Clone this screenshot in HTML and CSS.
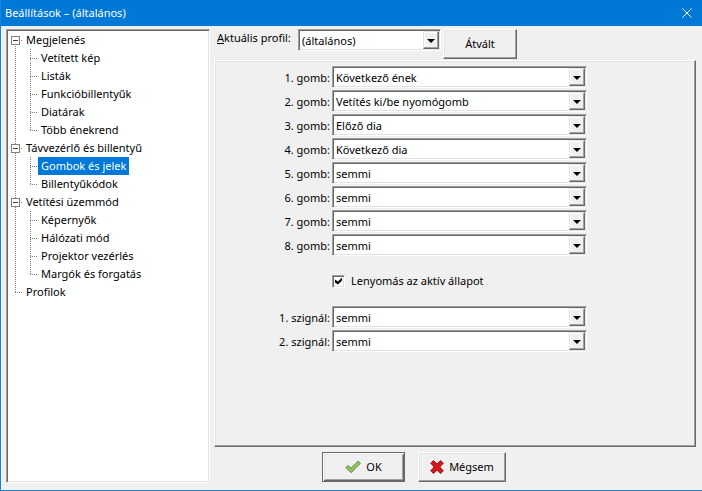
FILE: index.html
```html
<!DOCTYPE html>
<html lang="hu">
<head>
<meta charset="utf-8">
<meta name="viewport" content="width=device-width, initial-scale=1">
<title>Beállítások – (általános)</title>
<link rel="stylesheet" href="styles.css">
</head>
<body>
<div class="window">
  <header class="titlebar">
    <h1 class="title">Beállítások – (általános)</h1>
    <button class="close" type="button" aria-label="Bezárás">
      <svg width="10" height="10" viewBox="0 0 10 10"><path d="M0.5 0.5L9.5 9.5M9.5 0.5L0.5 9.5" stroke="#fff" fill="none"/></svg>
    </button>
  </header>
  <div class="content">
    <nav class="tree">
      <ul class="roots">
        <li class="root"><button class="toggle" type="button" aria-label="Megjelenés összecsukása"></button><a class="node" href="#">Megjelenés</a>
          <ul class="children">
            <li><a class="node" href="#">Vetített kép</a></li>
            <li><a class="node" href="#">Listák</a></li>
            <li><a class="node" href="#">Funkcióbillentyűk</a></li>
            <li><a class="node" href="#">Diatárak</a></li>
            <li><a class="node" href="#">Több énekrend</a></li>
          </ul>
        </li>
        <li class="root"><button class="toggle" type="button" aria-label="Távvezérlő és billentyű összecsukása"></button><a class="node" href="#">Távvezérlő és billentyű</a>
          <ul class="children">
            <li><a class="node selected" href="#">Gombok és jelek</a></li>
            <li><a class="node" href="#">Billentyűkódok</a></li>
          </ul>
        </li>
        <li class="root"><button class="toggle" type="button" aria-label="Vetítési üzemmód összecsukása"></button><a class="node" href="#">Vetítési üzemmód</a>
          <ul class="children">
            <li><a class="node" href="#">Képernyők</a></li>
            <li><a class="node" href="#">Hálózati mód</a></li>
            <li><a class="node" href="#">Projektor vezérlés</a></li>
            <li><a class="node" href="#">Margók és forgatás</a></li>
          </ul>
        </li>
        <li class="root"><a class="node" href="#">Profilok</a></li>
      </ul>
    </nav>
    <form class="main">
      <div class="profile">
        <label class="profile-label" for="profile"><u>A</u>ktuális profil:</label>
        <div class="combo profile-combo"><select id="profile"><option>(általános)</option></select><span class="arrow"></span></div>
        <button class="button switch" type="button">Átvált</button>
      </div>
      <div class="panel">
        <div class="field"><label for="g1">1. gomb:</label><div class="combo"><select id="g1"><option>Következő ének</option></select><span class="arrow"></span></div></div>
        <div class="field"><label for="g2">2. gomb:</label><div class="combo"><select id="g2"><option>Vetítés ki/be nyomógomb</option></select><span class="arrow"></span></div></div>
        <div class="field"><label for="g3">3. gomb:</label><div class="combo"><select id="g3"><option>Előző dia</option></select><span class="arrow"></span></div></div>
        <div class="field"><label for="g4">4. gomb:</label><div class="combo"><select id="g4"><option>Következő dia</option></select><span class="arrow"></span></div></div>
        <div class="field"><label for="g5">5. gomb:</label><div class="combo"><select id="g5"><option>semmi</option></select><span class="arrow"></span></div></div>
        <div class="field"><label for="g6">6. gomb:</label><div class="combo"><select id="g6"><option>semmi</option></select><span class="arrow"></span></div></div>
        <div class="field"><label for="g7">7. gomb:</label><div class="combo"><select id="g7"><option>semmi</option></select><span class="arrow"></span></div></div>
        <div class="field"><label for="g8">8. gomb:</label><div class="combo"><select id="g8"><option>semmi</option></select><span class="arrow"></span></div></div>
        <div class="check">
          <input id="active" type="checkbox" checked>
          <label for="active">Lenyomás az aktív állapot</label>
        </div>
        <div class="field"><label for="s1">1. szignál:</label><div class="combo"><select id="s1"><option>semmi</option></select><span class="arrow"></span></div></div>
        <div class="field"><label for="s2">2. szignál:</label><div class="combo"><select id="s2"><option>semmi</option></select><span class="arrow"></span></div></div>
      </div>
      <div class="actions">
        <button class="button ok" type="button">
          <svg width="16" height="16" viewBox="0 0 16 16"><path d="M0.7 8.6L3 6.4L6 9L13.2 2L15.4 4.3L6.2 13.7Z" fill="#8dbb60" stroke="#6b984a" stroke-linejoin="round"/><path d="M2.6 8.4L6.1 11.6L13.6 4" fill="none" stroke="#9cc873"/></svg>
          <span>OK</span>
        </button>
        <button class="button cancel" type="button">
          <svg width="14" height="16" viewBox="0 0 14 16"><path d="M3.5 1.5L7 5L10.5 1.5L13.3 4.2L9.8 8L13.3 11.8L10.5 14.5L7 11L3.5 14.5L0.7 11.8L4.2 8L0.7 4.2Z" fill="#d51a1a" stroke="#a31515" stroke-linejoin="round"/></svg>
          <span>Mégsem</span>
        </button>
      </div>
    </form>
  </div>
</div>
</body>
</html>
```
FILE: styles.css
```css
* { box-sizing: border-box; }

body {
  margin: 0;
  font: 11px/18px "Noto Sans", "Open Sans", sans-serif;
  color: #000;
}

button, select, input { font: inherit; color: inherit; }

.window {
  display: flex;
  flex-direction: column;
  min-height: 100vh;
  background: #f0f0f0;
  border: solid #1883d7;
  border-width: 0 0 1px 1px;
}

.titlebar {
  display: flex;
  align-items: center;
  justify-content: space-between;
  height: 26px;
  padding: 0 10px 0 4px;
  background: #0078d7;
  color: #fff;
}

.title { margin: 0; font-size: 11px; font-weight: 400; }

.close {
  display: flex;
  padding: 0;
  border: 0;
  background: none;
}

.content { display: flex; flex: 1; padding: 3px 6px 7px 5px; }

.tree {
  flex: 0 0 204px;
  background: #fff;
  border: 1px solid;
  border-color: #a0a0a0 #fff #fff #a0a0a0;
  box-shadow: inset 1px 1px #696969, inset -1px -1px #e3e3e3;
  padding: 1px;
}

.tree ul { margin: 0; padding: 0; list-style: none; }
.tree li { position: relative; }

.tree .roots { padding-left: 3px; }
.tree .root { padding-left: 12px; }
.tree .children li { padding-left: 15px; }

.node {
  display: inline-block;
  padding: 0 3px;
  vertical-align: top;
  color: inherit;
  text-decoration: none;
  white-space: nowrap;
}

.selected { background: #0078d7; color: #fff; }

/* dotted connectors between the tree items */
.root::before, .children li::before {
  content: "";
  position: absolute;
  top: 0;
  bottom: 0;
  left: 4px;
  width: 1px;
  background: repeating-linear-gradient(#808080 0 1px, transparent 1px 2px);
}
.root:first-child::before { top: 9px; }
.root:last-child::before { bottom: 9px; }
.children li:last-child::before { bottom: 9px; }
.children li::before { left: 7px; }

.root::after, .children li::after {
  content: "";
  position: absolute;
  top: 9px;
  left: 4px;
  width: 8px;
  height: 1px;
  background: repeating-linear-gradient(90deg, #808080 0 1px, transparent 1px 2px);
}
.children li::after { left: 7px; }

.toggle {
  position: absolute;
  z-index: 1;
  top: 5px;
  left: 0;
  width: 9px;
  height: 9px;
  padding: 0;
  border: 1px solid #808080;
  background: linear-gradient(#404040, #404040) center / 5px 1px no-repeat #fff;
}

.main {
  display: flex;
  flex-direction: column;
  flex: 1;
  min-width: 0;
  margin-left: 4px;
}

.profile { display: flex; align-items: flex-start; padding-left: 3px; }
.profile-label { width: 81px; white-space: nowrap; }
.profile-combo { width: 143px; margin-right: 2px; }

.button {
  display: flex;
  align-items: center;
  justify-content: center;
  gap: 5px;
  height: 30px;
  padding: 0;
  background: #f0f0f0;
  border: 1px solid;
  border-color: #fff #696969 #696969 #fff;
  box-shadow: inset -1px -1px #a0a0a0, inset 1px 1px #e3e3e3;
}
.switch { width: 74px; }

.panel {
  flex: 1;
  display: flex;
  flex-direction: column;
  gap: 2px;
  margin-top: 1px;
  padding: 5px 1px;
  border: 1px solid;
  border-color: #fff #696969 #696969 #fff;
  box-shadow: inset -1px -1px #a0a0a0, inset 1px 1px #e3e3e3;
}

.field {
  display: grid;
  grid-template-columns: 114px minmax(0, 255px);
  column-gap: 2px;
  align-items: center;
  text-align: right;
}
.field label { padding-top: 2px; }

.combo {
  position: relative;
  height: 22px;
  background: #fff;
  border: 1px solid;
  border-color: #a0a0a0 #fff #fff #a0a0a0;
  box-shadow: inset 1px 1px #696969, inset -1px -1px #e3e3e3;
}

.combo select {
  display: block;
  width: 100%;
  height: 20px;
  padding: 2px 18px 0 3px;
  border: 0;
  background: none;
  appearance: none;
  outline: 0;
}

.arrow {
  position: absolute;
  top: 1px;
  right: 1px;
  bottom: 1px;
  width: 16px;
  background: #f0f0f0;
  border: 1px solid;
  border-color: #e3e3e3 #696969 #696969 #e3e3e3;
  box-shadow: inset -1px -1px #a0a0a0, inset 1px 1px #fff;
  pointer-events: none;
}
.arrow::before {
  content: "";
  position: absolute;
  top: 7px;
  left: 3px;
  border: solid transparent;
  border-width: 4px 4px 0;
  border-top-color: #000;
}

.check {
  display: flex;
  align-items: center;
  gap: 6px;
  padding: 14px 0 14px 116px;
}

.check input {
  width: 13px;
  height: 13px;
  margin: 0;
  appearance: none;
  border: 1px solid;
  border-color: #a0a0a0 #fff #fff #a0a0a0;
  box-shadow: inset 1px 1px #696969, inset -1px -1px #e3e3e3;
  background: #fff;
}
.check input:checked::before {
  content: "";
  display: block;
  width: 7px;
  height: 7px;
  margin: 2px;
  background: #000;
  clip-path: polygon(0 2px, 3px 4px, 7px 0, 7px 3px, 3px 7px, 0 5px);
}

.actions {
  display: flex;
  gap: 13px;
  padding: 5px 0 1px 108px;
}
.ok {
  width: 83px;
  border-color: #696969;
  box-shadow: inset 1px 1px #fff, inset -1px -1px #696969, inset 2px 2px #e3e3e3, inset -2px -2px #a0a0a0;
}
.cancel { width: 88px; }
```
